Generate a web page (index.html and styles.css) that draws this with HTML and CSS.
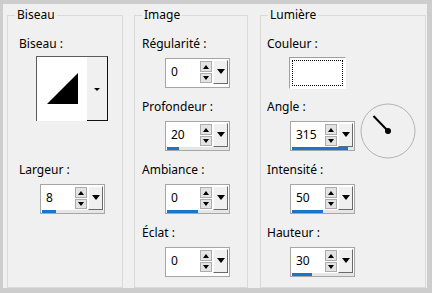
FILE: index.html
```html
<!DOCTYPE html>
<html>
<head>
<meta charset="utf-8">
<link rel="stylesheet" href="styles.css">
</head>
<body>
<div class="dialog">
  <fieldset class="group g-biseau">
    <legend>Biseau</legend>
    <div class="gbody">
      <div class="field first">
        <div class="lbl">Biseau :</div>
        <div class="bevel">
          <div class="bevel-preview">
            <svg width="50" height="63" viewBox="0 0 50 63"><polygon points="10,47 41,47 41,16" fill="#000"/></svg>
          </div>
          <div class="bevel-drop"><span class="tri-sm"></span></div>
        </div>
      </div>
      <div class="field f-largeur">
        <div class="lbl">Largeur :</div>
        <div class="spin">
          <div class="spin-row"><div class="val">8</div><div class="arrows"><div class="ab up"></div><div class="ab dn"></div></div><div class="drop"></div></div>
          <div class="track"><div class="fill" style="width:14px"></div></div>
        </div>
      </div>
    </div>
  </fieldset>

  <fieldset class="group g-image">
    <legend>Image</legend>
    <div class="gbody">
      <div class="field first">
        <div class="lbl">Régularité :</div>
        <div class="spin">
          <div class="spin-row"><div class="val">0</div><div class="arrows"><div class="ab up"></div><div class="ab dn"></div></div><div class="drop"></div></div>
          <div class="track none"></div>
        </div>
      </div>
      <div class="field">
        <div class="lbl">Profondeur :</div>
        <div class="spin">
          <div class="spin-row"><div class="val">20</div><div class="arrows"><div class="ab up"></div><div class="ab dn"></div></div><div class="drop"></div></div>
          <div class="track"><div class="fill" style="width:12px"></div></div>
        </div>
      </div>
      <div class="field">
        <div class="lbl">Ambiance :</div>
        <div class="spin">
          <div class="spin-row"><div class="val">0</div><div class="arrows"><div class="ab up"></div><div class="ab dn"></div></div><div class="drop"></div></div>
          <div class="track"><div class="fill" style="width:31px"></div></div>
        </div>
      </div>
      <div class="field">
        <div class="lbl">Éclat :</div>
        <div class="spin">
          <div class="spin-row"><div class="val">0</div><div class="arrows"><div class="ab up"></div><div class="ab dn"></div></div><div class="drop"></div></div>
          <div class="track none"></div>
        </div>
      </div>
    </div>
  </fieldset>

  <fieldset class="group g-light">
    <legend>Lumière</legend>
    <div class="gbody">
      <div class="field first">
        <div class="lbl">Couleur :</div>
        <div class="color"><div class="focus"></div></div>
      </div>
      <div class="field f-angle">
        <div class="lbl">Angle :</div>
        <div class="angle-row">
          <div class="spin">
            <div class="spin-row"><div class="val">315</div><div class="arrows"><div class="ab up"></div><div class="ab dn"></div></div><div class="drop"></div></div>
            <div class="track"><div class="fill" style="width:56px"></div></div>
          </div>
          <svg class="dial" width="56" height="56" viewBox="0 0 56 56">
            <circle cx="28" cy="28" r="27" fill="none" stroke="#b4b4b4" stroke-width="1"/>
            <line x1="13.5" y1="13" x2="28" y2="28" stroke="#000" stroke-width="2"/>
            <circle cx="28" cy="28" r="3" fill="#000"/>
          </svg>
        </div>
      </div>
      <div class="field">
        <div class="lbl">Intensité :</div>
        <div class="spin">
          <div class="spin-row"><div class="val">50</div><div class="arrows"><div class="ab up"></div><div class="ab dn"></div></div><div class="drop"></div></div>
          <div class="track"><div class="fill" style="width:31px"></div></div>
        </div>
      </div>
      <div class="field">
        <div class="lbl">Hauteur :</div>
        <div class="spin">
          <div class="spin-row"><div class="val">30</div><div class="arrows"><div class="ab up"></div><div class="ab dn"></div></div><div class="drop"></div></div>
          <div class="track"><div class="fill" style="width:20px"></div></div>
        </div>
      </div>
    </div>
  </fieldset>
</div>
</body>
</html>
```
FILE: styles.css
```css
html, body { margin: 0; padding: 0; }
body {
  background: #cdcdcd;
  width: 432px;
  height: 293px;
  overflow: hidden;
  font-family: "Noto Sans", "Open Sans", sans-serif;
  font-size: 12px;
  color: #000;
}
.dialog {
  margin: 4px 0 0 3px;
  width: 424px;
  height: 284px;
  background: #f0f0f0;
  display: flex;
  align-items: flex-start;
  padding-left: 4px;
  box-sizing: border-box;
}
.group {
  margin: 3px 0 0 0;
  padding: 0;
  border: 1px solid #d9d9d9;
  height: 281px;
  box-sizing: border-box;
  min-width: 0;
}
.group legend {
  padding: 0 2px;
  margin-left: 7px;
  line-height: 16px;
}
.g-biseau { width: 116px; }
.g-image { width: 114px; margin-left: 11px; }
.g-light { width: 166px; margin-left: 12px; }
.g-biseau .gbody { padding-left: 11px; }
.g-image .gbody { padding-left: 7px; }
.g-light .gbody { padding-left: 6px; }

.field { margin-top: 11px; }
.field.first { margin-top: 13px; }
.lbl { line-height: 16px; height: 16px; white-space: nowrap; }
.field .spin { margin-top: 6px; }
.g-biseau .spin { margin-left: 21px; }
.g-image .spin { margin-left: 23px; }
.g-light .spin { margin-left: 23px; }

/* bevel picker */
.bevel {
  margin: 4px 0 0 17px;
  width: 72px;
  height: 65px;
  box-sizing: border-box;
  border: 1px solid #5c5c5c;
  border-right-color: #111;
  border-bottom: 0;
  display: flex;
}
.bevel-preview { width: 50px; background: #fff; }
.bevel-preview svg { display: block; }
.bevel-drop {
  flex: 1;
  background: #f0f0f0;
  border-bottom: 1px solid #111;
  display: flex;
  align-items: center;
  justify-content: center;
}
.tri-sm {
  width: 0; height: 0;
  border-left: 3px solid transparent;
  border-right: 3px solid transparent;
  border-top: 3px solid #000;
  margin-top: 1px;
}
.f-largeur { margin-top: 41px; }

/* spin box */
.spin {
  width: 65px;
  height: 30px;
  box-sizing: border-box;
  border: 1px solid #a6a6a6;
  background: #fff;
  display: flex;
  flex-direction: column;
}
.spin-row { height: 25px; display: flex; }
.val { width: 34px; padding-left: 5px; box-sizing: border-box; line-height: 25px; }
.arrows { width: 12px; display: flex; flex-direction: column; gap: 1px; margin-top: 2px; }
.ab {
  width: 12px; height: 11px;
  box-sizing: border-box;
  border: 1px solid #adadad;
  background: #e3e3e3;
  display: flex; align-items: center; justify-content: center;
}
.ab.dn { height: 10px; }
.ab.up::after {
  content: ""; width: 0; height: 0;
  border-left: 3px solid transparent;
  border-right: 3px solid transparent;
  border-bottom: 4px solid #000;
}
.ab.dn::after {
  content: ""; width: 0; height: 0;
  border-left: 3px solid transparent;
  border-right: 3px solid transparent;
  border-top: 4px solid #000;
}
.drop {
  width: 15px;
  height: 24px;
  margin: 1px 0 0 1px;
  box-sizing: border-box;
  border: 1px solid;
  border-color: #fff #6a6a6a #6a6a6a #fff;
  background: #f0f0f0;
  display: flex;
  justify-content: center;
  padding-top: 8px;
}
.drop::after {
  content: ""; width: 0; height: 0;
  border-left: 4px solid transparent;
  border-right: 4px solid transparent;
  border-top: 5px solid #000;
}
.track { height: 3px; width: 62px; margin-left: 1px; background: #e6e6e6; }
.track.none { background: transparent; }
.fill { height: 3px; background: #1c75c8; }

/* color */
.color {
  margin: 5px 0 0 22px;
  width: 57px;
  height: 32px;
  box-sizing: border-box;
  border: 1px solid;
  border-color: #a0a0a0 #fff #fff #a0a0a0;
  background: #fff;
  padding: 2px;
}
.focus { height: 100%; box-sizing: border-box; border: 1px dotted #000; }
.f-angle { margin-top: 10px; }
.angle-row { display: flex; align-items: flex-start; }
.dial { margin: -12px 0 -14px 5px; display: block; }
```
